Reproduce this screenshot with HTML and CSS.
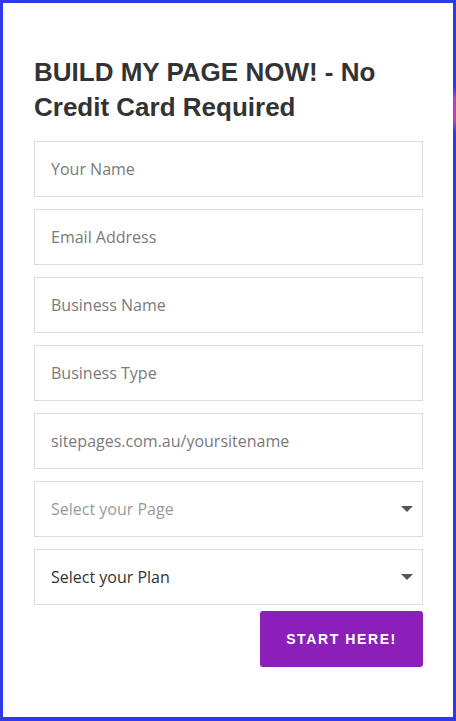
FILE: index.html
```html
<!DOCTYPE html>
<html lang="en">
<head>
<meta charset="utf-8">
<title>Build My Page Now</title>
<link rel="stylesheet" href="styles.css">
</head>
<body>
<div class="frame">
  <span class="edge-glow"></span>
  <form class="signup">
    <h2 class="title">BUILD MY PAGE NOW! - No Credit Card Required</h2>
    <input class="field" type="text" placeholder="Your Name">
    <input class="field" type="email" placeholder="Email Address">
    <input class="field" type="text" placeholder="Business Name">
    <input class="field" type="text" placeholder="Business Type">
    <input class="field" type="text" placeholder="sitepages.com.au/yoursitename">
    <div class="select-wrap">
      <select class="field select placeholder">
        <option>Select your Page</option>
      </select>
      <span class="caret"></span>
    </div>
    <div class="select-wrap">
      <select class="field select">
        <option>Select your Plan</option>
      </select>
      <span class="caret"></span>
    </div>
    <div class="actions">
      <button class="submit" type="button">START HERE!</button>
    </div>
  </form>
</div>
</body>
</html>
```
FILE: styles.css
```css
html, body {
  margin: 0;
  padding: 0;
  background: #2f3ae9;
}
body {
  padding: 3px 3px 4px 3px;
  height: 721px;
  box-sizing: border-box;
}
.frame {
  position: relative;
  background: #ffffff;
  height: 714px;
  box-sizing: border-box;
  padding: 52px 30px 0 31px;
}
.edge-glow {
  position: absolute;
  right: -3px;
  top: 85px;
  width: 3px;
  height: 44px;
  background: linear-gradient(180deg, rgba(220,60,190,0) 0%, rgba(220,60,190,0.85) 25%, rgba(220,60,190,0.85) 75%, rgba(220,60,190,0) 100%);
}
.signup {
  display: flex;
  flex-direction: column;
  gap: 12px;
  margin: 0;
}
.title {
  margin: 0 0 4px 0;
  font-family: "Liberation Sans", Arial, sans-serif;
  font-weight: bold;
  font-size: 26px;
  line-height: 35px;
  color: #333333;
}
.field {
  display: block;
  width: 100%;
  height: 56px;
  box-sizing: border-box;
  border: 1px solid #dddddd;
  border-radius: 0;
  background: #ffffff;
  padding: 0 16px;
  margin: 0;
  font-family: "Open Sans", sans-serif;
  font-size: 16px;
  color: #333333;
  outline: none;
}
.field::placeholder {
  color: #7a7a7a;
  opacity: 1;
}
.select-wrap {
  position: relative;
}
.select {
  appearance: none;
  -webkit-appearance: none;
  color: #333333;
}
.select.placeholder {
  color: #9a9a9a;
}
.caret {
  position: absolute;
  right: 10px;
  top: 25px;
  width: 0;
  height: 0;
  border-left: 6px solid transparent;
  border-right: 6px solid transparent;
  border-top: 6px solid #555555;
  pointer-events: none;
}
.actions {
  display: flex;
  justify-content: flex-end;
  margin-top: -6px;
}
.submit {
  width: 163px;
  height: 56px;
  border: none;
  border-radius: 3px;
  background: #8c1fba;
  color: #ffffff;
  font-family: "Liberation Sans", Arial, sans-serif;
  font-weight: bold;
  font-size: 14px;
  letter-spacing: 1.6px;
  cursor: pointer;
}
```
